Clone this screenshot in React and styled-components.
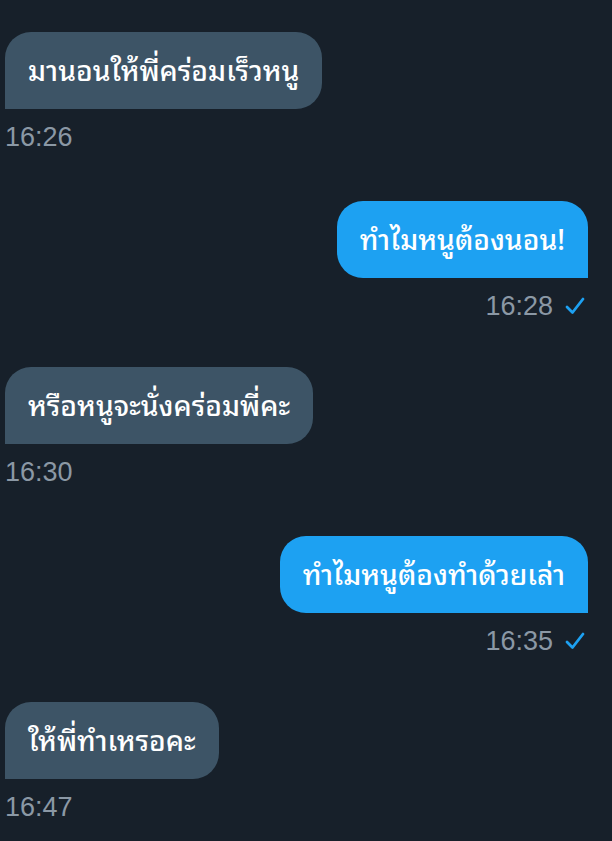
import React from "react";
import styled, { createGlobalStyle } from "styled-components";

const messages = [
  { id: 1, text: "มานอนให้พี่คร่อมเร็วหนู", time: "16:26", mine: false },
  { id: 2, text: "ทำไมหนูต้องนอน!", time: "16:28", mine: true },
  { id: 3, text: "หรือหนูจะนั่งคร่อมพี่คะ", time: "16:30", mine: false },
  { id: 4, text: "ทำไมหนูต้องทำด้วยเล่า", time: "16:35", mine: true },
  { id: 5, text: "ให้พี่ทำเหรอคะ", time: "16:47", mine: false },
];

const GlobalStyle = createGlobalStyle`
  html, body {
    margin: 0;
    padding: 0;
    background-color: #17202a;
  }
  body {
    font-family: "Noto Sans Thai Looped", Loma, Garuda, "Noto Sans Thai", "Noto Sans", sans-serif;
  }
`;

const Page = styled.div`
  box-sizing: border-box;
  width: 612px;
  height: 841px;
  overflow: hidden;
  background-color: #17202a;
  padding: 32px 24px 0 5px;
  display: flex;
  flex-direction: column;
`;

const Message = styled.div`
  display: flex;
  flex-direction: column;
  align-items: ${(p) => (p.mine ? "flex-end" : "flex-start")};
  margin-bottom: ${(p) => (p.mine ? "45px" : "48px")};
`;

const Bubble = styled.div`
  box-sizing: border-box;
  height: 77px;
  padding: 0 23px 4px;
  display: flex;
  align-items: center;
  font-size: 28.2px;
  font-weight: 500;
  color: #ffffff;
  white-space: nowrap;
  background-color: ${(p) => (p.mine ? "#1da1f2" : "#3d5466")};
  border-radius: ${(p) => (p.mine ? "26px 26px 0 26px" : "26px 26px 26px 0")};
`;

const Meta = styled.div`
  display: flex;
  align-items: center;
  gap: 12px;
  margin-top: 12px;
  height: 32px;
  padding-right: ${(p) => (p.mine ? "3px" : "0")};
`;

const Time = styled.span`
  font-family: "Liberation Sans", Arial, sans-serif;
  font-size: 27px;
  line-height: 32px;
  color: #8b98a5;
`;

const Check = () => (
  <svg width="20" height="20" viewBox="0 0 20 20" fill="none">
    <path
      d="M2 11 L7.5 16.5 L18 3"
      stroke="#1da1f2"
      strokeWidth="2.8"
      strokeLinecap="round"
      strokeLinejoin="round"
    />
  </svg>
);

const App = () => {
  return (
    <Page>
      <GlobalStyle />
      {messages.map((m) => (
        <Message key={m.id} mine={m.mine}>
          <Bubble mine={m.mine}>{m.text}</Bubble>
          <Meta mine={m.mine}>
            <Time>{m.time}</Time>
            {m.mine && <Check />}
          </Meta>
        </Message>
      ))}
    </Page>
  );
};

export default App;
